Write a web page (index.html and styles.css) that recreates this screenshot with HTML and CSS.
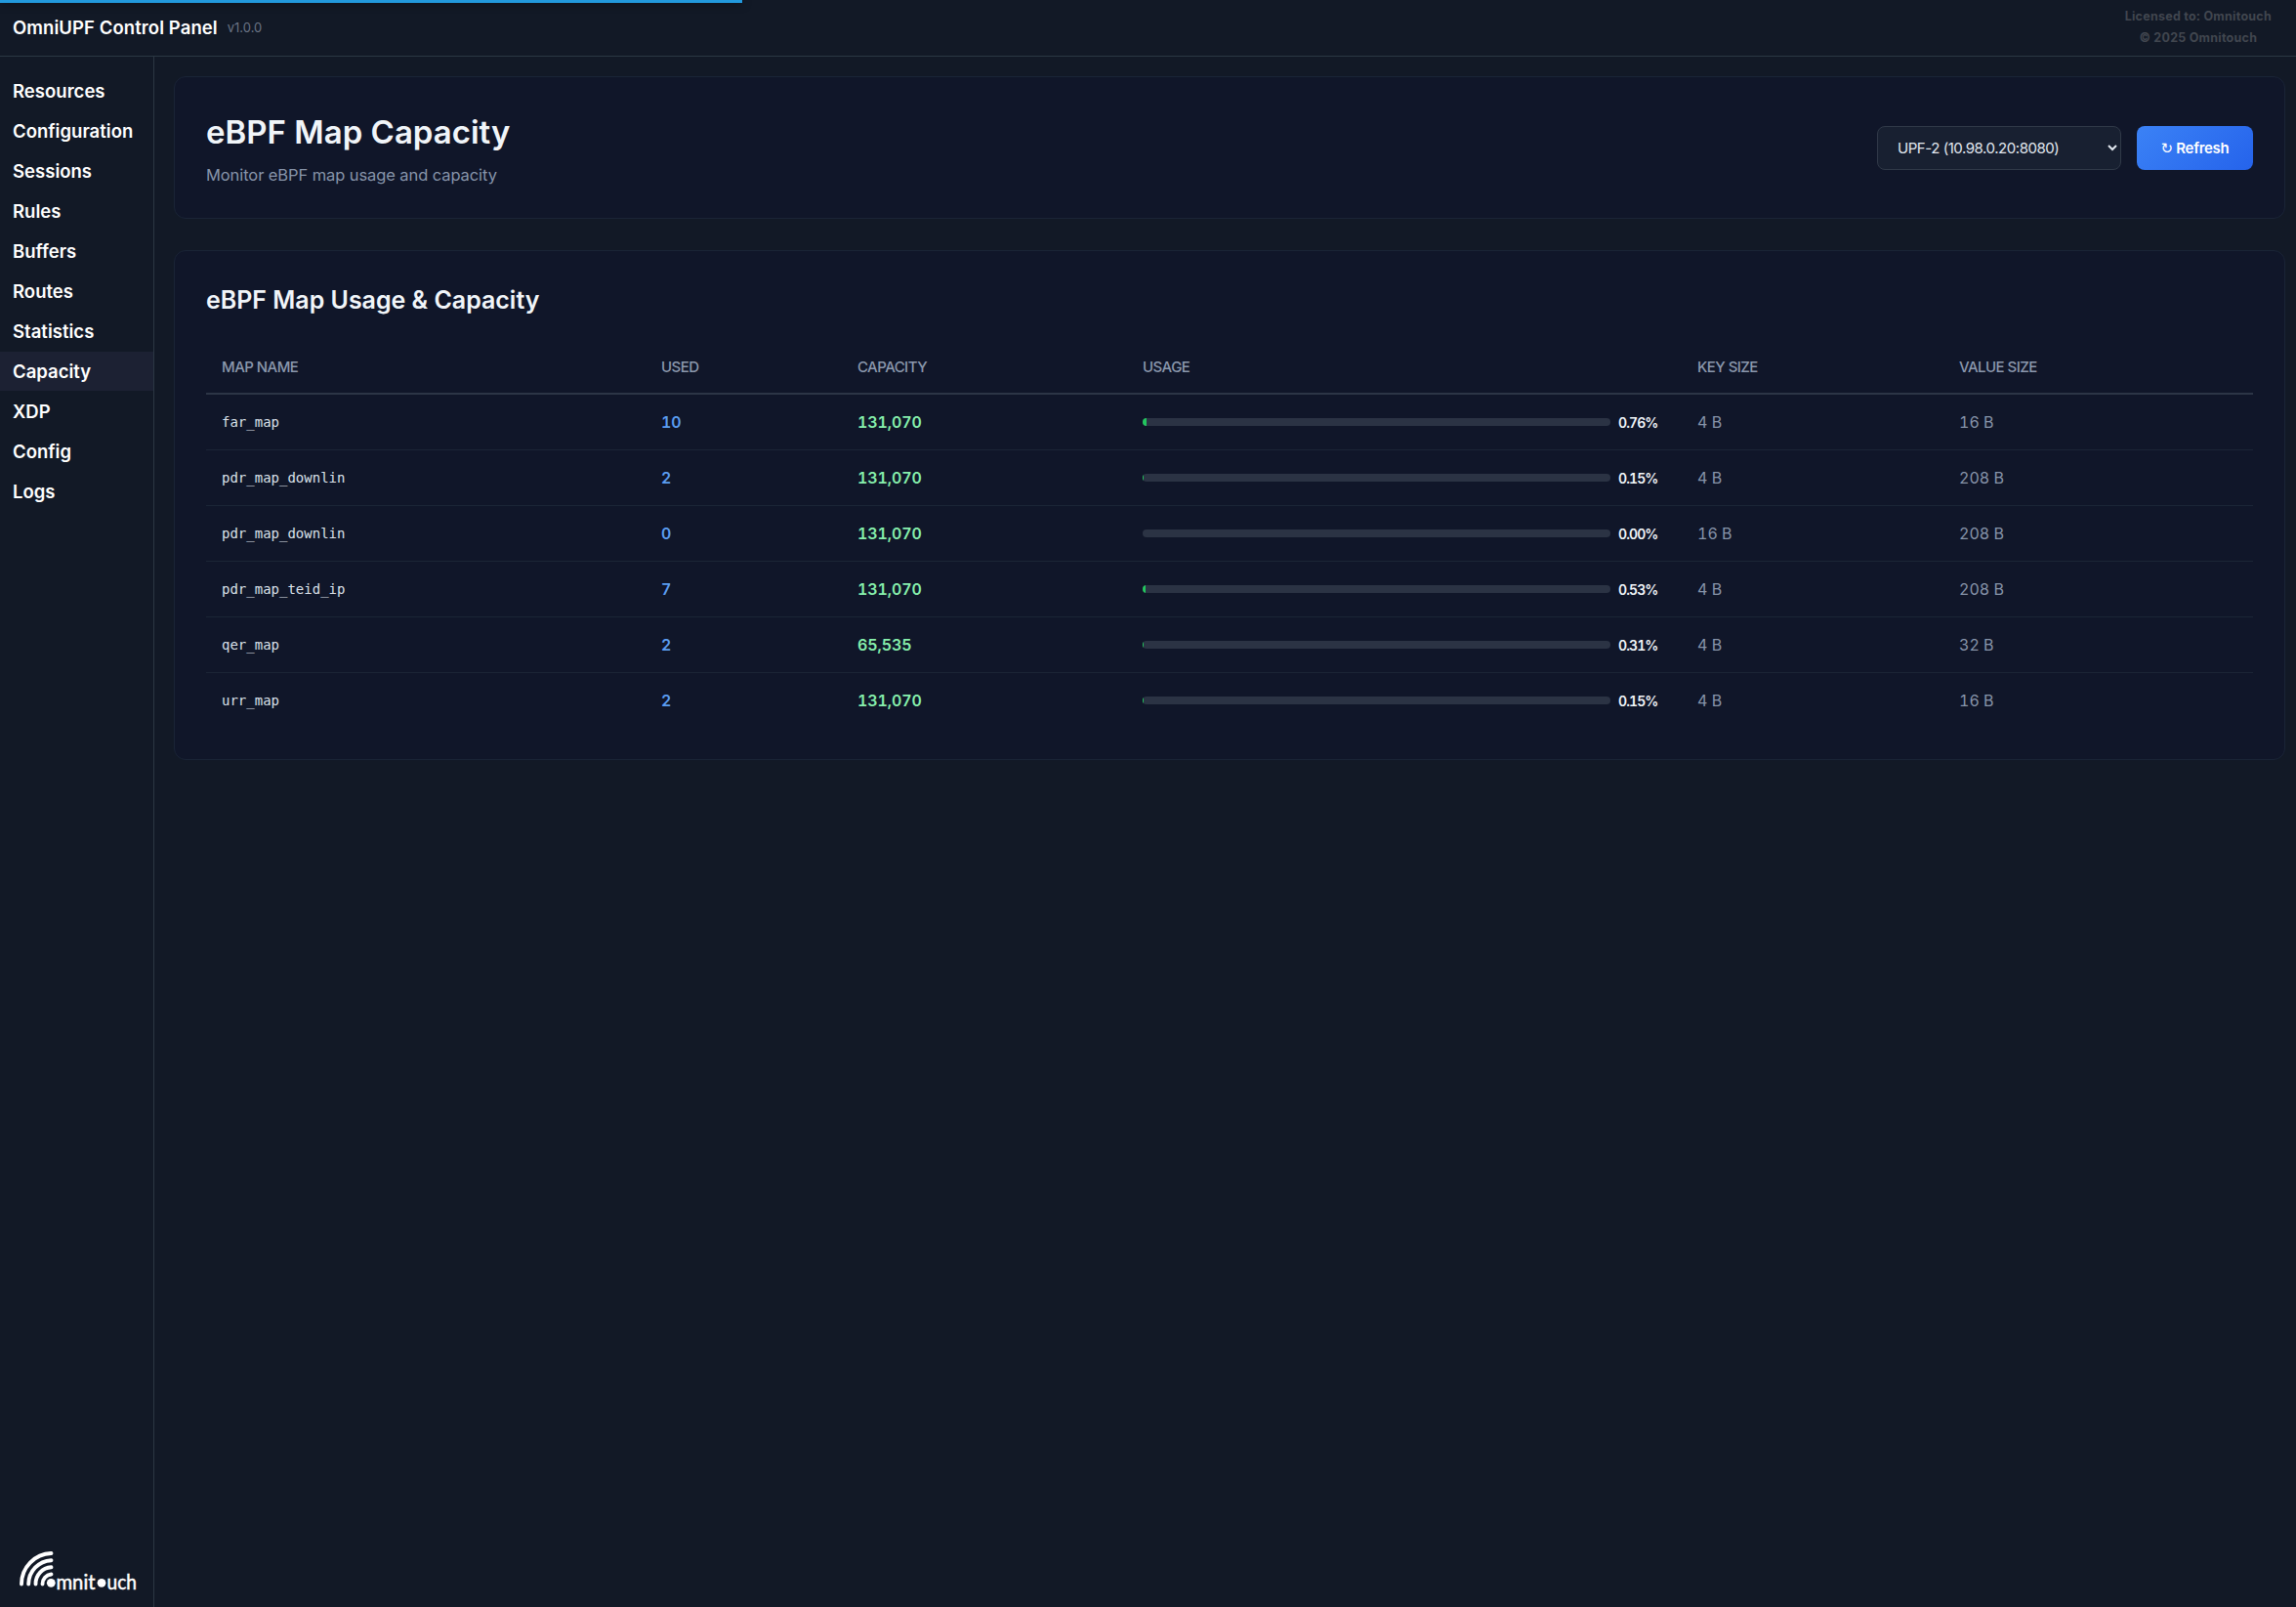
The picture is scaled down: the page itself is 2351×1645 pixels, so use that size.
FILE: index.html
```html
<!DOCTYPE html>
<html lang="en">
<head>
    <meta charset="UTF-8">
    <meta name="viewport" content="width=device-width, initial-scale=1.0">
    <title>OmniUPF Control Panel</title>
    <link rel="stylesheet" href="styles.css">
</head>
<body>

<div class="topbar"></div>

<header class="header">
    <div class="brand">
        <span class="brand-name">OmniUPF Control Panel</span>
        <span class="version">v1.0.0</span>
    </div>
    <div class="license">
        <div class="license-to">Licensed to: Omnitouch</div>
        <div class="license-copy">© 2025 Omnitouch</div>
    </div>
</header>

<div class="layout">
    <aside class="sidebar">
        <nav class="menu">
            <a href="#">Resources</a>
            <a href="#">Configuration</a>
            <a href="#">Sessions</a>
            <a href="#">Rules</a>
            <a href="#">Buffers</a>
            <a href="#">Routes</a>
            <a href="#">Statistics</a>
            <a href="#" class="active">Capacity</a>
            <a href="#">XDP</a>
            <a href="#">Config</a>
            <a href="#">Logs</a>
        </nav>
        <svg class="logo" width="128" height="50" viewBox="0 0 128 50">
            <!-- signal arcs -->
            <g fill="none" stroke="#fff" stroke-width="3.9" stroke-linecap="round">
                <path d="M6 36.500A31.500 31.500 0 0 1 36.500 5"/>
                <path d="M13.200 36.500A24.500 24.500 0 0 1 36.500 12.200"/>
                <path d="M20.500 36.500A17 17 0 0 1 36.500 19.300"/>
                <path d="M27.500 36.500A10 10 0 0 1 36.500 26.500"/>
            </g>
            <circle cx="36.300" cy="35.300" r="4.400" fill="#fff"/>
            <circle cx="88" cy="35.300" r="4.400" fill="#fff"/>
            <g class="logo-text">
                <text x="41.500" y="42" textLength="40" lengthAdjust="spacingAndGlyphs">mnit</text>
                <text x="93.500" y="42" textLength="30.500" lengthAdjust="spacingAndGlyphs">uch</text>
            </g>
        </svg>
    </aside>

    <main class="main">
        <section class="card page-head">
            <div>
                <h1>eBPF Map Capacity</h1>
                <p class="subtitle">Monitor eBPF map usage and capacity</p>
            </div>
            <div class="actions">
                <select class="upf-select">
                    <option>UPF-2 (10.98.0.20:8080)</option>
                </select>
                <button class="refresh"><span class="arrow">↻</span> Refresh</button>
            </div>
        </section>

        <section class="card">
            <h2>eBPF Map Usage &amp; Capacity</h2>
            <table class="maps">
                <colgroup>
                    <col class="c-name">
                    <col class="c-used">
                    <col class="c-cap">
                    <col class="c-usage">
                    <col class="c-key">
                    <col class="c-value">
                </colgroup>
                <thead>
                    <tr>
                        <th>Map Name</th>
                        <th>Used</th>
                        <th>Capacity</th>
                        <th>Usage</th>
                        <th>Key Size</th>
                        <th>Value Size</th>
                    </tr>
                </thead>
                <tbody>
                    <tr>
                        <td class="name">far_map</td>
                        <td class="used">10</td>
                        <td class="cap">131,070</td>
                        <td><div class="usage"><div class="bar"><div class="fill" style="width: 0.76%"></div></div><span class="pct">0.76%</span></div></td>
                        <td class="size">4 B</td>
                        <td class="size">16 B</td>
                    </tr>
                    <tr>
                        <td class="name">pdr_map_downlin</td>
                        <td class="used">2</td>
                        <td class="cap">131,070</td>
                        <td><div class="usage"><div class="bar"><div class="fill" style="width: 0.15%"></div></div><span class="pct">0.15%</span></div></td>
                        <td class="size">4 B</td>
                        <td class="size">208 B</td>
                    </tr>
                    <tr>
                        <td class="name">pdr_map_downlin</td>
                        <td class="used">0</td>
                        <td class="cap">131,070</td>
                        <td><div class="usage"><div class="bar"><div class="fill" style="width: 0%"></div></div><span class="pct">0.00%</span></div></td>
                        <td class="size">16 B</td>
                        <td class="size">208 B</td>
                    </tr>
                    <tr>
                        <td class="name">pdr_map_teid_ip</td>
                        <td class="used">7</td>
                        <td class="cap">131,070</td>
                        <td><div class="usage"><div class="bar"><div class="fill" style="width: 0.53%"></div></div><span class="pct">0.53%</span></div></td>
                        <td class="size">4 B</td>
                        <td class="size">208 B</td>
                    </tr>
                    <tr>
                        <td class="name">qer_map</td>
                        <td class="used">2</td>
                        <td class="cap">65,535</td>
                        <td><div class="usage"><div class="bar"><div class="fill" style="width: 0.31%"></div></div><span class="pct">0.31%</span></div></td>
                        <td class="size">4 B</td>
                        <td class="size">32 B</td>
                    </tr>
                    <tr>
                        <td class="name">urr_map</td>
                        <td class="used">2</td>
                        <td class="cap">131,070</td>
                        <td><div class="usage"><div class="bar"><div class="fill" style="width: 0.15%"></div></div><span class="pct">0.15%</span></div></td>
                        <td class="size">4 B</td>
                        <td class="size">16 B</td>
                    </tr>
                </tbody>
            </table>
        </section>
    </main>
</div>

</body>
</html>
```

FILE: styles.css
```css
* {
    box-sizing: border-box;
}

body {
    margin: 0;
    min-height: 100vh;
    display: flex;
    flex-direction: column;
    background: #121926;
    color: #fff;
    font-family: Inter, "Liberation Sans", sans-serif;
    font-size: 16px;
}

/* page loading bar */
.topbar {
    position: absolute;
    top: 0;
    left: 0;
    width: 760px;
    height: 3px;
    background: #2299dd;
    box-shadow: 0 0 10px rgba(0, 0, 0, 0.6);
}

.header {
    height: 58px;
    display: flex;
    justify-content: space-between;
    align-items: center;
    padding: 0 25px 0 13px;
    border-bottom: 1px solid #2b3743;
}

.brand {
    display: flex;
    align-items: center;
    gap: 10px;
    padding-bottom: 2px;
}

.brand-name {
    font-size: 18.5px;
    font-weight: 600;
    letter-spacing: 0.08px;
}

.version {
    font-size: 13px;
    color: #6b7485;
}

.license {
    padding-bottom: 2px;
    font-size: 12.5px;
    font-weight: 700;
    line-height: 22px;
    letter-spacing: 0.25px;
    text-align: center;
    color: #41464f;
}

.layout {
    flex: 1;
    display: flex;
}

.sidebar {
    width: 158px;
    display: flex;
    flex-direction: column;
    justify-content: space-between;
    padding-top: 15px;
    border-right: 1px solid #2b3743;
}

.menu {
    display: flex;
    flex-direction: column;
    gap: 1px;
}

.menu a {
    height: 40px;
    line-height: 40px;
    padding-left: 13px;
    color: #fff;
    font-size: 18.5px;
    font-weight: 600;
    letter-spacing: 0.02px;
    text-decoration: none;
}

.menu a.active {
    background: #1c2133;
}

.logo {
    margin: 0 0 10px 16px;
}

.logo-text {
    fill: #fff;
    stroke: #fff;
    stroke-width: 0.5;
    font-family: Lato, sans-serif;
    font-size: 22px;
}

.main {
    flex: 1;
    padding: 20px 11px 20px 20px;
}

.card {
    padding: 32px;
    margin-bottom: 32px;
    background: #101629;
    border: 1px solid #1a2436;
    border-radius: 12px;
}

.page-head {
    height: 146px;
    display: flex;
    justify-content: space-between;
    align-items: center;
}

h1 {
    margin: 0;
    font-size: 33px;
    font-weight: 600;
    line-height: 48px;
    letter-spacing: 0;
    color: #f1f5f9;
}

.subtitle {
    margin: 8px 0 0;
    line-height: 24px;
    font-size: 16.5px;
    letter-spacing: -0.09px;
    color: #8794a9;
}

.actions {
    display: flex;
    gap: 16px;
}

.upf-select {
    width: 250px;
    height: 45px;
    padding: 0 16px;
    background: #182031;
    border: 1px solid #303948;
    border-radius: 8px;
    color: #e2e8f0;
    font-family: inherit;
    font-size: 15px;
    letter-spacing: -0.45px;
}

.refresh {
    width: 119px;
    height: 45px;
    padding: 0;
    border: none;
    border-radius: 8px;
    background: linear-gradient(135deg, #3b82f6, #2563eb);
    color: #fff;
    font-family: inherit;
    font-size: 15px;
    font-weight: 600;
    letter-spacing: -0.3px;
}

.arrow {
    font-family: "DejaVu Sans", sans-serif;
    font-weight: 400;
}

h2 {
    margin: 0 0 24px;
    font-size: 25px;
    font-weight: 600;
    line-height: 36px;
    letter-spacing: -0.02px;
    color: #f1f5f9;
}

.maps {
    width: 100%;
    table-layout: fixed;
    border-collapse: separate;
    border-spacing: 0;
    font-variant-numeric: tabular-nums;
}

.c-name { width: 450px; }
.c-used { width: 201px; }
.c-cap { width: 292px; }
.c-usage { width: 568px; }
.c-key { width: 268px; }

.maps th {
    height: 55px;
    padding: 0 16px;
    border-bottom: 2px solid #2c3546;
    text-align: left;
    text-transform: uppercase;
    font-size: 15px;
    font-weight: 500;
    letter-spacing: -0.55px;
    color: #8b98ad;
}

.maps td {
    height: 57px;
    padding: 0 16px;
    border-bottom: 1px solid #1b2536;
}

.maps tbody tr:last-child td {
    height: 56px;
    border-bottom: none;
}

.maps .name {
    font-family: "DejaVu Sans Mono", monospace;
    font-size: 14px;
    color: #dbe1ea;
}

.used {
    font-weight: 600;
    color: #5b9df0;
}

.cap {
    font-weight: 600;
    letter-spacing: -0.1px;
    color: #86efac;
}

.size {
    color: #8794a9;
}

.usage {
    display: flex;
    align-items: center;
    gap: 8px;
}

.bar {
    flex: 1;
    height: 8px;
    background: #2b3344;
    border-radius: 4px;
    overflow: hidden;
}

.fill {
    height: 100%;
    background: #22c55e;
}

.pct {
    width: 49px;
    font-size: 14px;
    font-weight: 600;
    letter-spacing: -0.9px;
    color: #f1f5f9;
}
```
